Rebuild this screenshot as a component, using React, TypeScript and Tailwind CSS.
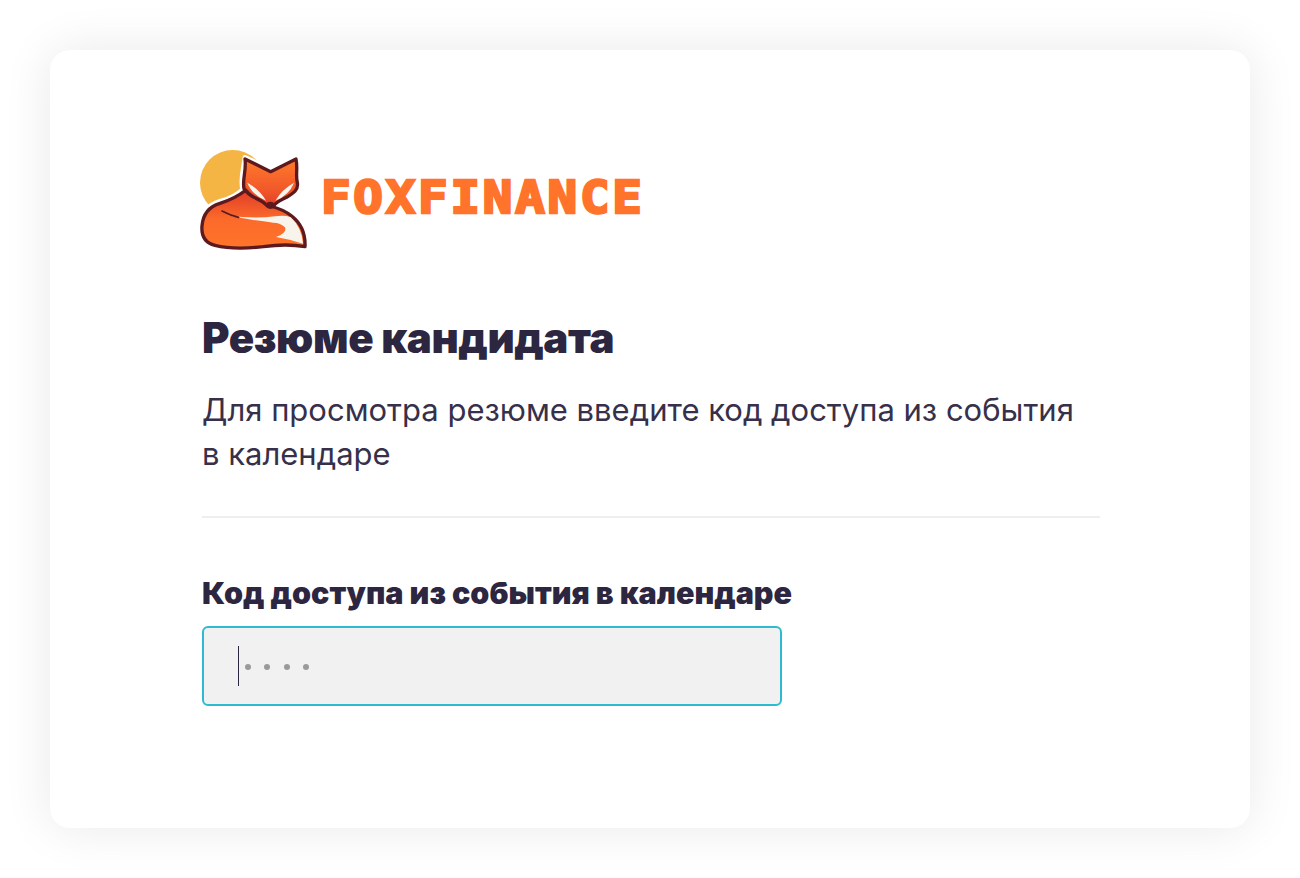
const FoxLogo = () => (
  <svg width="130" height="115" viewBox="0 0 390 345" className="block shrink-0">
    <defs>
      <linearGradient id="head" x1="0" y1="0" x2="0" y2="1">
        <stop offset="0" stopColor="#ff7a2b" />
        <stop offset="0.6" stopColor="#f25a2a" />
        <stop offset="1" stopColor="#e23d28" />
      </linearGradient>
      <linearGradient id="body" x1="0" y1="0" x2="0" y2="1">
        <stop offset="0" stopColor="#e03c28" />
        <stop offset="0.5" stopColor="#fb6a2a" />
        <stop offset="1" stopColor="#ff742a" />
      </linearGradient>
    </defs>
    <circle cx="128" cy="128" r="98" fill="#f4b545" />
    {/* white halo round the fox */}
    <path
      d="M165 52 L243 88 L318 52 C328 80 322 105 328 128 C332 150 318 165 300 176 L300 215 Q350 255 349 325 Q290 312 225 326 Q120 334 72 320 Q25 305 30 258 Q36 200 90 184 Q135 172 158 148 C150 120 160 90 165 52 Z"
      fill="#fff"
      stroke="#fff"
      strokeWidth="14"
      strokeLinejoin="round"
    />
    {/* body and tail */}
    <path
      d="M168 150 Q135 176 90 190 Q40 205 36 258 Q32 305 75 316 Q130 330 220 320 Q290 310 345 320 Q348 262 305 228 Q280 208 240 198 Z"
      fill="url(#body)"
      stroke="#5c1a1e"
      strokeWidth="10"
      strokeLinejoin="round"
    />
    {/* white tail tip */}
    <path
      d="M112 226 Q190 238 255 229 Q285 225 302 232 Q335 262 339 311 Q300 298 258 291 Q292 280 285 262 Q272 248 250 248 Q180 240 112 226 Z"
      fill="#f8f4ec"
    />
    <path d="M96 213 Q120 226 146 232" fill="none" stroke="#5c1a1e" strokeWidth="5" strokeLinecap="round" />
    {/* head */}
    <path
      d="M165 57 L242 95 L318 57 C324 85 316 105 322 128 C326 150 310 160 290 172 Q262 184 250 198 Q241 206 232 198 Q220 184 192 172 Q172 160 162 146 C156 120 170 90 165 57 Z"
      fill="url(#head)"
      stroke="#5c1a1e"
      strokeWidth="10"
      strokeLinejoin="round"
    />
    {/* cheeks */}
    <path d="M172 128 Q208 148 228 182 Q186 165 172 128 Z" fill="#f8f4ec" />
    <path d="M312 128 Q276 148 256 182 Q298 165 312 128 Z" fill="#f8f4ec" />
    <path d="M166 140 Q190 178 232 188 L194 174 Z" fill="#5c1a1e" />
    <path d="M318 140 Q294 178 252 188 L290 174 Z" fill="#5c1a1e" />
    <ellipse cx="241" cy="194" rx="12" ry="9" fill="#5c1a1e" />
  </svg>
);

export default function App() {
  return (
    <div className="min-h-[878px] bg-white p-[50px] font-['Inter',sans-serif] text-[#2d2640]">
      <div className="h-[778px] rounded-[20px] bg-white pl-[152px] pr-[150px] pt-[90px] shadow-[0_0_50px_rgba(0,0,0,0.09)]">
        <div className="flex items-center">
          <div className="-ml-[12px]">
            <FoxLogo />
          </div>
          <div className="ml-[1px] mt-[-1px] origin-left scale-x-[1.09] font-['DejaVu_Sans_Mono',monospace] text-[45px] font-bold leading-none tracking-[2.6px] text-[#ff732b] [-webkit-text-stroke:2.5px_#ff732b]">
            FOXFINANCE
          </div>
        </div>
        <h1 className="mt-[55px] text-[42px] font-black leading-[56px] tracking-[-0.4px]">
          Резюме кандидата
        </h1>
        <p className="mt-[22px] max-w-[898px] text-[31px] leading-[44px] text-[#37304a]">
          Для просмотра резюме введите код доступа из события
          <br />в календаре
        </p>
        <div className="mt-[40px] h-[2px] bg-[#eeeeee]" />
        <label className="mt-[53px] block text-[30.5px] font-black leading-[44px]">
          Код доступа из события в календаре
        </label>
        <div className="mt-[11px] flex h-[80px] w-[580px] items-center rounded-[6px] border-2 border-[#2cbbd1] bg-[#f1f1f1] pl-[34px]">
          <div className="h-[40px] w-px bg-[#2d2640]" />
          <div className="ml-[6px] mt-[1px] flex gap-[13.3px]">
            <span className="size-[6px] rounded-full bg-[#9a9a9a]" />
            <span className="size-[6px] rounded-full bg-[#9a9a9a]" />
            <span className="size-[6px] rounded-full bg-[#9a9a9a]" />
            <span className="size-[6px] rounded-full bg-[#9a9a9a]" />
          </div>
        </div>
      </div>
    </div>
  );
}
